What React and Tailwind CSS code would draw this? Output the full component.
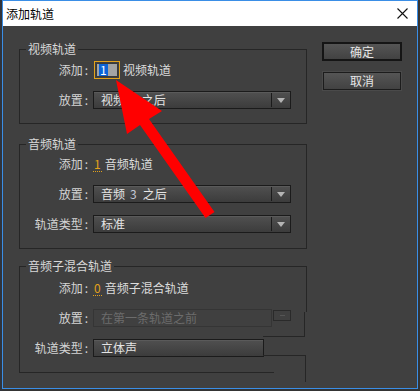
import React from "react";

function Label({ children }) {
  return (
    <div className="w-[68px] shrink-0 text-right text-[#d4d4d4] leading-[18px] whitespace-nowrap">
      {children}
      <span className="ml-[2px]">:</span>
    </div>
  );
}

function Arrow() {
  return (
    <div className="w-[18px] flex items-center justify-center">
      <svg width="8" height="5" viewBox="0 0 8 5">
        <polygon points="0,0 8,0 4,5" fill="#b4b4b4" />
      </svg>
    </div>
  );
}

function Select({ children, w = "w-[198px]", arrow = true }) {
  return (
    <div
      className={`flex h-[18px] ${w} border border-[#1b1b1b] bg-gradient-to-b from-[#505050] to-[#3c3c3c] shadow-[inset_0_1px_0_#5a5a5a]`}
    >
      <div className="flex-1 pl-[7px] leading-[16px] text-[#e4e4e4] whitespace-nowrap overflow-hidden">
        {children}
      </div>
      {arrow && (
        <>
          <div className="w-px bg-[#1b1b1b] my-[1px]" />
          <Arrow />
        </>
      )}
    </div>
  );
}

function Group({ title, pt, pb, mt, children }) {
  return (
    <fieldset
      className={`border border-[#262626] w-[288px] min-w-0 ${pt} ${pb} ${mt}`}
    >
      <legend className="ml-[6px] px-[2px] h-[16px] leading-[16px] text-[#d8d8d8]">
        {title}
      </legend>
      <div className="flex flex-col gap-[12px]">{children}</div>
    </fieldset>
  );
}

function Row({ children }) {
  return <div className="flex items-center h-[18px] gap-[5px]">{children}</div>;
}

function Num({ n }) {
  return (
    <span className="text-[#e3a21a] border-b border-dotted border-[#e3a21a] leading-[14px] px-px">
      {n}
    </span>
  );
}

export default function App() {
  return (
    <div className="relative w-[420px] h-[391px] bg-[#343434] overflow-hidden [font-family:'Noto_Sans_CJK_SC','Noto_Sans',sans-serif] text-[12px]">
      <div className="absolute left-0 top-0 w-[2px] h-[391px] bg-[#30343c]" />
      <div className="ml-[2px] w-[416px] h-[389px] border border-[#3a8ee6] flex flex-col">
        {/* title bar */}
        <div className="h-[25px] bg-white flex items-center justify-between pl-[3px] pr-[9px] shrink-0">
          <span className="text-black text-[12px] leading-[16px]">添加轨道</span>
          <svg width="11" height="11" viewBox="0 0 11 11">
            <path d="M0.5 0.5 L10.5 10.5 M10.5 0.5 L0.5 10.5" stroke="#111" strokeWidth="1.1" />
          </svg>
        </div>
        {/* body */}
        <div className="flex-1 bg-[#404040] flex pl-[16px] pt-[15px]">
          <div className="flex flex-col">
            <Group title="视频轨道" pt="pt-[4px]" pb="pb-[14px]" mt="">
              <Row>
                <Label>添加</Label>
                <div className="ml-[1px] w-[26px] h-[18px] border border-[#e3a21a] p-px">
                  <div className="w-full h-full bg-[#a4a4a4] border border-[#3a3a3a] flex items-center pl-[2px]">
                    <span className="bg-[#0a64d8] text-white leading-[12px] h-[12px] px-px text-[12px]">1</span>
                  </div>
                </div>
                <span className="text-[#dcdcdc] ml-[-2px]">视频轨道</span>
              </Row>
              <Row>
                <Label>放置</Label>
                <Select>
                  视频<span className="ml-[5px] mr-[5px]">1</span>之后
                </Select>
              </Row>
            </Group>
            <Group title="音频轨道" pt="pt-[3px]" pb="pb-[15px]" mt="mt-[12px]">
              <Row>
                <Label>添加</Label>
                <div className="flex items-center gap-[3px]">
                  <Num n="1" />
                  <span className="text-[#dcdcdc]">音频轨道</span>
                </div>
              </Row>
              <Row>
                <Label>放置</Label>
                <Select>
                  音频<span className="ml-[5px] mr-[6px] text-[#c4c8d6]">3</span>之后
                </Select>
              </Row>
              <Row>
                <Label>轨道类型</Label>
                <Select>标准</Select>
              </Row>
            </Group>
            <Group title="音频子混合轨道" pt="pt-[5px]" pb="pb-[15px]" mt="mt-[9px]">
              <Row>
                <Label>添加</Label>
                <div className="flex items-center gap-[3px]">
                  <Num n="0" />
                  <span className="text-[#dcdcdc]">音频子混合轨道</span>
                </div>
              </Row>
              <Row>
                <Label>放置</Label>
                <div className="flex items-start h-[18px]">
                  <div className="w-[179px] h-[18px] border border-[#353535] pl-[7px] leading-[16px] text-[#6c6c6c]">
                    在第一条轨道之前
                  </div>
                  <div className="ml-[1px] mt-[1px] w-[18px] h-[11px] border border-[#2a2a2a] flex items-center justify-center">
                    <div className="w-[5px] h-px bg-[#555]" />
                  </div>
                </div>
              </Row>
              <Row>
                <Label>轨道类型</Label>
                <Select w="w-[171px]" arrow={false}>立体声</Select>
              </Row>
            </Group>
          </div>
          {/* buttons */}
          <div className="ml-[15px] mt-[1px] flex flex-col items-center gap-[11px] w-[80px]">
            <button className="w-[80px] h-[19px] border-2 border-[#151515] bg-gradient-to-b from-[#555555] to-[#424242] text-[#e6e6e6] text-[12px] leading-[15px]">
              确定
            </button>
            <button className="w-[78px] h-[18px] border border-[#1c1c1c] bg-gradient-to-b from-[#555555] to-[#424242] text-[#e6e6e6] text-[12px] leading-[16px] shadow-[0_0_0_1px_#4a4a4a]">
              取消
            </button>
          </div>
        </div>
      </div>

      {/* rendering glitch in bottom-right of the third group */}
      <div className="absolute left-[274px] top-[328px] w-[34px] h-[47px] bg-[#404040]" />
      <div className="absolute left-[291px] top-[312px] w-[17px] h-[17px] bg-[#404040]" />
      <div className="absolute left-[304px] top-[312px] w-px h-[25px] bg-[#262626]" />
      <div className="absolute left-[263px] top-[336px] w-[42px] h-px bg-[#262626]" />
      <div className="absolute left-[263px] top-[355px] w-[43px] h-px bg-[#262626]" />
      <div className="absolute left-[305px] top-[355px] w-px h-[27px] bg-[#262626]" />

      {/* red annotation arrow */}
      <svg className="absolute left-0 top-0 pointer-events-none" width="420" height="391" viewBox="0 0 420 391">
        <polygon
          points="116,80 162,111 149,119 214.5,212 205.5,218 140,125 127,134"
          fill="#ff0000"
        />
      </svg>
    </div>
  );
}
